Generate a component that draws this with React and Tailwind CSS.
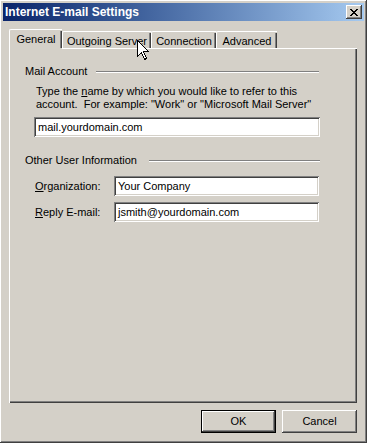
import React from "react";

const raised =
  "shadow-[inset_-1px_-1px_#404040,inset_1px_1px_#ffffff,inset_-2px_-2px_#808080,inset_2px_2px_#d4d0c8]";
const sunken =
  "shadow-[inset_1px_1px_#808080,inset_-1px_-1px_#ffffff,inset_2px_2px_#404040,inset_-2px_-2px_#d4d0c8]";

function Tab({ label, selected, width }) {
  if (selected) {
    return (
      <div
        className="relative h-[20px] -mb-[1px] z-10 bg-[#d4d0c8] border-l border-t border-white rounded-tl-[2px] flex items-start justify-center pt-[3px]"
        style={{ width }}
      >
        <div className="absolute right-0 top-[1px] bottom-[1px] w-[1px] bg-[#404040]" />
        <div className="absolute right-[1px] top-[1px] bottom-[1px] w-[1px] bg-[#808080]" />
        <span>{label}</span>
      </div>
    );
  }
  return (
    <div
      className="relative h-[17px] bg-[#d4d0c8] border-l border-t border-white rounded-tl-[2px] flex items-start justify-center pt-[3px]"
      style={{ width }}
    >
      <div className="absolute right-0 top-[1px] bottom-0 w-[1px] bg-[#404040]" />
      <div className="absolute right-[1px] top-[1px] bottom-0 w-[1px] bg-[#808080]" />
      <span>{label}</span>
    </div>
  );
}

function Input({ value, width }) {
  return (
    <div
      className={`h-[20px] bg-white ${sunken} pl-[4px] flex items-center`}
      style={{ width }}
    >
      <span className="text-black">{value}</span>
    </div>
  );
}

export default function App() {
  return (
    <div
      className={`relative w-[367px] h-[443px] bg-[#d4d0c8] ${raised} p-[3px] flex flex-col text-[11px] leading-[13px] text-black overflow-hidden`}
      style={{ fontFamily: '"Liberation Sans", Arial, sans-serif' }}
    >
      {/* Title bar */}
      <div className="h-[18px] flex items-center bg-gradient-to-r from-[#0a246a] to-[#a6caf0] pl-[2px] pr-[2px]">
        <span className="text-white font-bold text-[12px] leading-[14px]">
          Internet E-mail Settings
        </span>
        <div className="flex-1" />
        <div
          className={`w-[16px] h-[14px] bg-[#d4d0c8] ${raised} flex items-center justify-center`}
        >
          <svg width="8" height="7" viewBox="0 0 8 7">
            <path
              d="M0 0h2v1h1v1h2V1h1V0h2v1H7v1H6v1H5v1h1v1h1v1h1v1H6V6H5V5H3v1H2v1H0V6h1V5h1V4h1V3H2V2H1V1H0z"
              fill="#000"
            />
          </svg>
        </div>
      </div>

      {/* Tabs */}
      <div className="ml-[6px] mt-[8px] flex items-end h-[19px] relative">
        <div className="flex items-end">
          <Tab label="General" selected width={53} />
          <Tab label="Outgoing Server" width={89} />
          <Tab label="Connection" width={65} />
          <Tab label="Advanced" width={61} />
        </div>
      </div>

      {/* Panel */}
      <div className="ml-[6px] mr-[7px] h-[355px] bg-[#d4d0c8] border-l border-t border-white relative">
        <div className="absolute right-0 top-0 bottom-0 w-[1px] bg-[#404040]" />
        <div className="absolute right-[1px] top-0 bottom-[1px] w-[1px] bg-[#808080]" />
        <div className="absolute left-0 right-0 bottom-0 h-[1px] bg-[#404040]" />
        <div className="absolute left-0 right-[1px] bottom-[1px] h-[1px] bg-[#808080]" />

        <div className="flex flex-col pl-[15px] pt-[16px]">
          {/* Mail Account */}
          <div className="flex items-center h-[13px] w-[294px]">
            <span>Mail Account</span>
            <div className="flex-1 ml-[9px] mt-[1px] h-[2px] border-t border-[#808080] border-b border-b-white" />
          </div>
          <div className="pl-[11px] mt-[7px] leading-[13px]">
            <div>
              Type the <span className="underline">n</span>ame by which you would
              like to refer to this
            </div>
            <div>
              account.&nbsp; For example: "Work" or "Microsoft Mail Server"
            </div>
          </div>
          <div className="pl-[9px] mt-[6px]">
            <Input value="mail.yourdomain.com" width={286} />
          </div>

          {/* Other User Information */}
          <div className="flex items-center h-[13px] w-[295px] mt-[17px]">
            <span>Other User Information</span>
            <div className="flex-1 ml-[12px] mt-[1px] h-[2px] border-t border-[#808080] border-b border-b-white" />
          </div>
          <div className="pl-[10px] mt-[9px] flex items-center">
            <span className="w-[79px]">
              <span className="underline">O</span>rganization:
            </span>
            <Input value="Your Company" width={205} />
          </div>
          <div className="pl-[10px] mt-[6px] flex items-center">
            <span className="w-[79px]">
              <span className="underline">R</span>eply E-mail:
            </span>
            <Input value="jsmith@yourdomain.com" width={205} />
          </div>
        </div>
      </div>

      {/* Buttons */}
      <div className="flex justify-end gap-[6px] mr-[7px] mt-[7px]">
        <div className="w-[75px] h-[23px] border border-black">
          <div className={`w-full h-full ${raised} flex items-center justify-center`}>
            OK
          </div>
        </div>
        <div className={`w-[75px] h-[23px] ${raised} flex items-center justify-center`}>
          Cancel
        </div>
      </div>

      {/* Mouse cursor */}
      <svg
        className="absolute left-[137px] top-[40px]"
        width="13"
        height="21"
        viewBox="0 0 13 21"
      >
        <path
          d="M0.5 0.5 L0.5 16.5 L4.5 12.5 L7.5 19.5 L9.5 18.5 L6.5 11.5 L11.5 11.5 Z"
          fill="#fff"
          stroke="#000"
          strokeWidth="1"
          shapeRendering="crispEdges"
        />
      </svg>
    </div>
  );
}
